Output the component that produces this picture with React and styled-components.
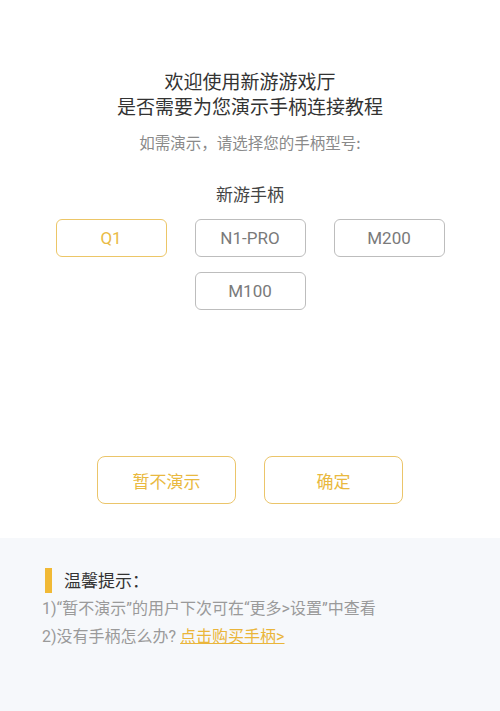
import React, { useState } from "react";
import styled, { createGlobalStyle } from "styled-components";

const GlobalStyle = createGlobalStyle`
  body {
    margin: 0;
    background: #ffffff;
    font-family: "Noto Sans CJK SC", "Noto Sans", sans-serif;
  }
`;

const models = ["Q1", "N1-PRO", "M200", "M100"];

const App = () => {
  const [picked, setPicked] = useState("Q1");

  return (
    <Page>
      <GlobalStyle />
      <Top>
        <Title>
          欢迎使用新游游戏厅
          <br />
          是否需要为您演示手柄连接教程
        </Title>
        <Sub>如需演示，请选择您的手柄型号:</Sub>
        <Brand>新游手柄</Brand>
        <Models>
          {models.map((m) => (
            <Model key={m} active={m === picked} onClick={() => setPicked(m)}>
              {m}
            </Model>
          ))}
        </Models>
        <Actions>
          <Action>暂不演示</Action>
          <Action>确定</Action>
        </Actions>
      </Top>
      <Tips>
        <TipHead>温馨提示：</TipHead>
        <TipLine>1)“暂不演示”的用户下次可在“更多&gt;设置”中查看</TipLine>
        <TipLine>
          2)没有手柄怎么办? <BuyLink href="#">点击购买手柄&gt;</BuyLink>
        </TipLine>
      </Tips>
    </Page>
  );
};

const Page = styled.div`
  width: 500px;
  min-height: 711px;
  display: flex;
  flex-direction: column;
`;

const Top = styled.div`
  height: 538px;
  box-sizing: border-box;
  padding-top: 68px;
  display: flex;
  flex-direction: column;
  align-items: center;
  background: #fff;
`;

const Title = styled.div`
  font-size: 19px;
  line-height: 25px;
  color: #333;
  text-align: center;
`;

const Sub = styled.div`
  margin-top: 13px;
  font-size: 15.5px;
  line-height: 22px;
  color: #8a8a8a;
`;

const Brand = styled.div`
  margin-top: 29px;
  font-size: 17px;
  line-height: 24px;
  color: #444;
`;

const Models = styled.div`
  margin-top: 13px;
  width: 389px;
  display: flex;
  flex-wrap: wrap;
  justify-content: center;
  gap: 15px 28px;
`;

const Model = styled.div`
  width: 111px;
  height: 38px;
  box-sizing: border-box;
  border: 1px solid ${(p) => (p.active ? "#ecc667" : "#bdbdbd")};
  border-radius: 6px;
  display: flex;
  align-items: center;
  justify-content: center;
  font-family: "Roboto", "Noto Sans", sans-serif;
  font-size: 17px;
  color: ${(p) => (p.active ? "#e9bb45" : "#7a7a7a")};
  cursor: pointer;
`;

const Actions = styled.div`
  margin-top: 146px;
  display: flex;
  gap: 28px;
`;

const Action = styled.div`
  width: 139px;
  height: 48px;
  box-sizing: border-box;
  border: 1px solid #ebc56a;
  border-radius: 8px;
  display: flex;
  align-items: center;
  justify-content: center;
  font-size: 17px;
  color: #e9b940;
  cursor: pointer;
`;

const Tips = styled.div`
  flex: 1;
  background: #f6f8fb;
  padding: 29px 0 0 42px;
`;

const TipHead = styled.div`
  display: flex;
  align-items: center;
  font-size: 17px;
  line-height: 26px;
  color: #333;

  &::before {
    content: "";
    width: 7px;
    height: 25px;
    margin: 0 12px 0 3px;
    background: #f1b935;
  }
`;

const TipLine = styled.div`
  margin-top: 3px;
  font-family: "Roboto", "Noto Sans CJK SC", sans-serif;
  font-size: 16px;
  line-height: 25px;
  color: #9a9a9a;
`;

const BuyLink = styled.a`
  color: #eab53a;
  text-decoration: underline;
`;

export default App;
